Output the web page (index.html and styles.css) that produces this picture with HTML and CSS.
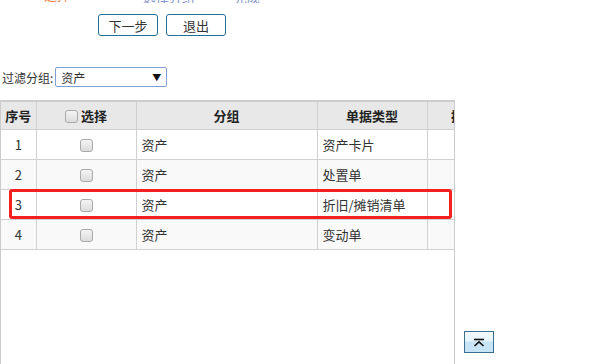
FILE: index.html
```html
<!DOCTYPE html>
<html lang="zh-CN">
<head>
    <meta charset="UTF-8">
    <title>单据分组</title>
    <link rel="stylesheet" href="styles.css">
</head>
<body>
    <div class="steps">
        <div class="steps-inner">
            <span class="step done s1">选择</span>
            <span class="step done s2">一</span>
            <span class="step todo s3">选择分组</span>
            <span class="step todo s4">完成</span>
        </div>
    </div>

    <div class="actions">
        <button class="btn">下一步</button>
        <button class="btn">退出</button>
    </div>

    <div class="filter">
        <label>过滤分组:</label>
        <div class="select">
            <span>资产</span>
            <span class="arrow">▼</span>
        </div>
    </div>

    <div class="grid-wrap">
        <table class="grid">
            <colgroup>
                <col style="width:35px">
                <col style="width:100px">
                <col style="width:181px">
                <col style="width:110px">
                <col style="width:74px">
            </colgroup>
            <thead>
                <tr>
                    <th>序号</th>
                    <th><span class="check"></span>选择</th>
                    <th>分组</th>
                    <th>单据类型</th>
                    <th>操作</th>
                </tr>
            </thead>
            <tbody>
                <tr>
                    <td class="num">1</td>
                    <td class="center"><span class="check"></span></td>
                    <td>资产</td>
                    <td>资产卡片</td>
                    <td></td>
                </tr>
                <tr>
                    <td class="num">2</td>
                    <td class="center"><span class="check"></span></td>
                    <td>资产</td>
                    <td>处置单</td>
                    <td></td>
                </tr>
                <tr>
                    <td class="num">3</td>
                    <td class="center"><span class="check"></span></td>
                    <td>资产</td>
                    <td>折旧/摊销清单</td>
                    <td></td>
                </tr>
                <tr>
                    <td class="num">4</td>
                    <td class="center"><span class="check"></span></td>
                    <td>资产</td>
                    <td>变动单</td>
                    <td></td>
                </tr>
            </tbody>
        </table>
        <div class="highlight"></div>
    </div>

    <button class="to-top" title="返回顶部">
        <svg width="12" height="9" viewBox="0 0 12 9">
            <path d="M1 1.5 H11" stroke="#111" stroke-width="1.6" fill="none"/>
            <path d="M1.5 8 L6 3.8 L10.5 8" stroke="#111" stroke-width="1.6" fill="none"/>
        </svg>
    </button>
</body>
</html>
```

FILE: styles.css
```css
body {
    margin: 0;
    font-family: "Noto Sans CJK SC", "Liberation Sans", sans-serif;
    font-size: 12px;
    color: #333;
    background-color: #fff;
    position: relative;
    height: 364px;
    overflow: hidden;
}
/* step bar scrolled mostly out of view */
.steps {
    height: 3px;
    overflow: hidden;
}
.steps-inner {
    margin-top: -13px;
    font-size: 13px;
    line-height: 15px;
    white-space: nowrap;
}
.step { display: inline-block; }
.done { color: #f08040; }
.todo { color: #8898d0; }
.s1 { margin-left: 44px; width: 26px; overflow: hidden; }
.s2 { margin-left: 34px; }
.s3 { margin-left: 20px; }
.s4 { margin-left: 36px; }
.actions {
    display: flex;
    gap: 8px;
    padding: 11px 0 0 98px;
}
.btn {
    width: 60px;
    height: 22px;
    padding: 0;
    background-color: #fff;
    border: 1px solid #1d6f93;
    border-radius: 3px;
    font-family: inherit;
    font-size: 13px;
    color: #333;
}
.filter {
    display: flex;
    align-items: center;
    gap: 2px;
    margin-top: 31px;
    padding-left: 2px;
}
.select {
    display: flex;
    justify-content: space-between;
    align-items: center;
    width: 100px;
    height: 18px;
    padding: 0 5px;
    border: 1px solid #7f9fd4;
    border-radius: 2px;
}
.arrow {
    font-size: 9px;
    color: #111;
}
.grid-wrap {
    position: relative;
    width: 453px;
    height: 280px;
    margin-top: 13px;
    border-left: 1px solid #ccc;
    border-right: 1px solid #ccc;
    overflow: hidden;
}
.grid {
    width: 500px;
    border-collapse: collapse;
    table-layout: fixed;
    border-top: 2px solid #ccc;
}
.grid th, .grid td {
    border: 1px solid #d0d0d0;
    white-space: nowrap;
    overflow: hidden;
}
.grid th {
    height: 27px;
    background-color: #e8e8e8;
    font-size: 13px;
    font-weight: bold;
    color: #222;
    text-align: center;
    padding: 0;
}
.grid td {
    height: 29px;
    padding: 0 5px;
    font-size: 13px;
    color: #333;
}
.grid th:first-child, .grid td:first-child { border-left: none; }
.grid tbody tr:nth-child(even) { background-color: #f9f9f9; }
.grid td.num { text-align: center; padding: 0; }
.grid td.center { text-align: center; }
.check {
    display: inline-block;
    width: 11px;
    height: 11px;
    border: 1px solid #aaa;
    border-radius: 3px;
    background: linear-gradient(#f4f4f4, #dcdcdc);
    vertical-align: -2px;
}
th .check { margin-right: 3px; }
.highlight {
    position: absolute;
    left: 8px;
    top: 89px;
    width: 437px;
    height: 24px;
    border: 3px solid #f42020;
    border-radius: 3px;
}
.to-top {
    position: absolute;
    left: 464px;
    top: 331px;
    width: 30px;
    height: 22px;
    padding: 0;
    border: 1px solid #3b6e8f;
    background: linear-gradient(#f3f9fe 0%, #e6f3fc 45%, #c7e4f7 50%, #c7e4f7 100%);
    display: flex;
    align-items: center;
    justify-content: center;
}
```
